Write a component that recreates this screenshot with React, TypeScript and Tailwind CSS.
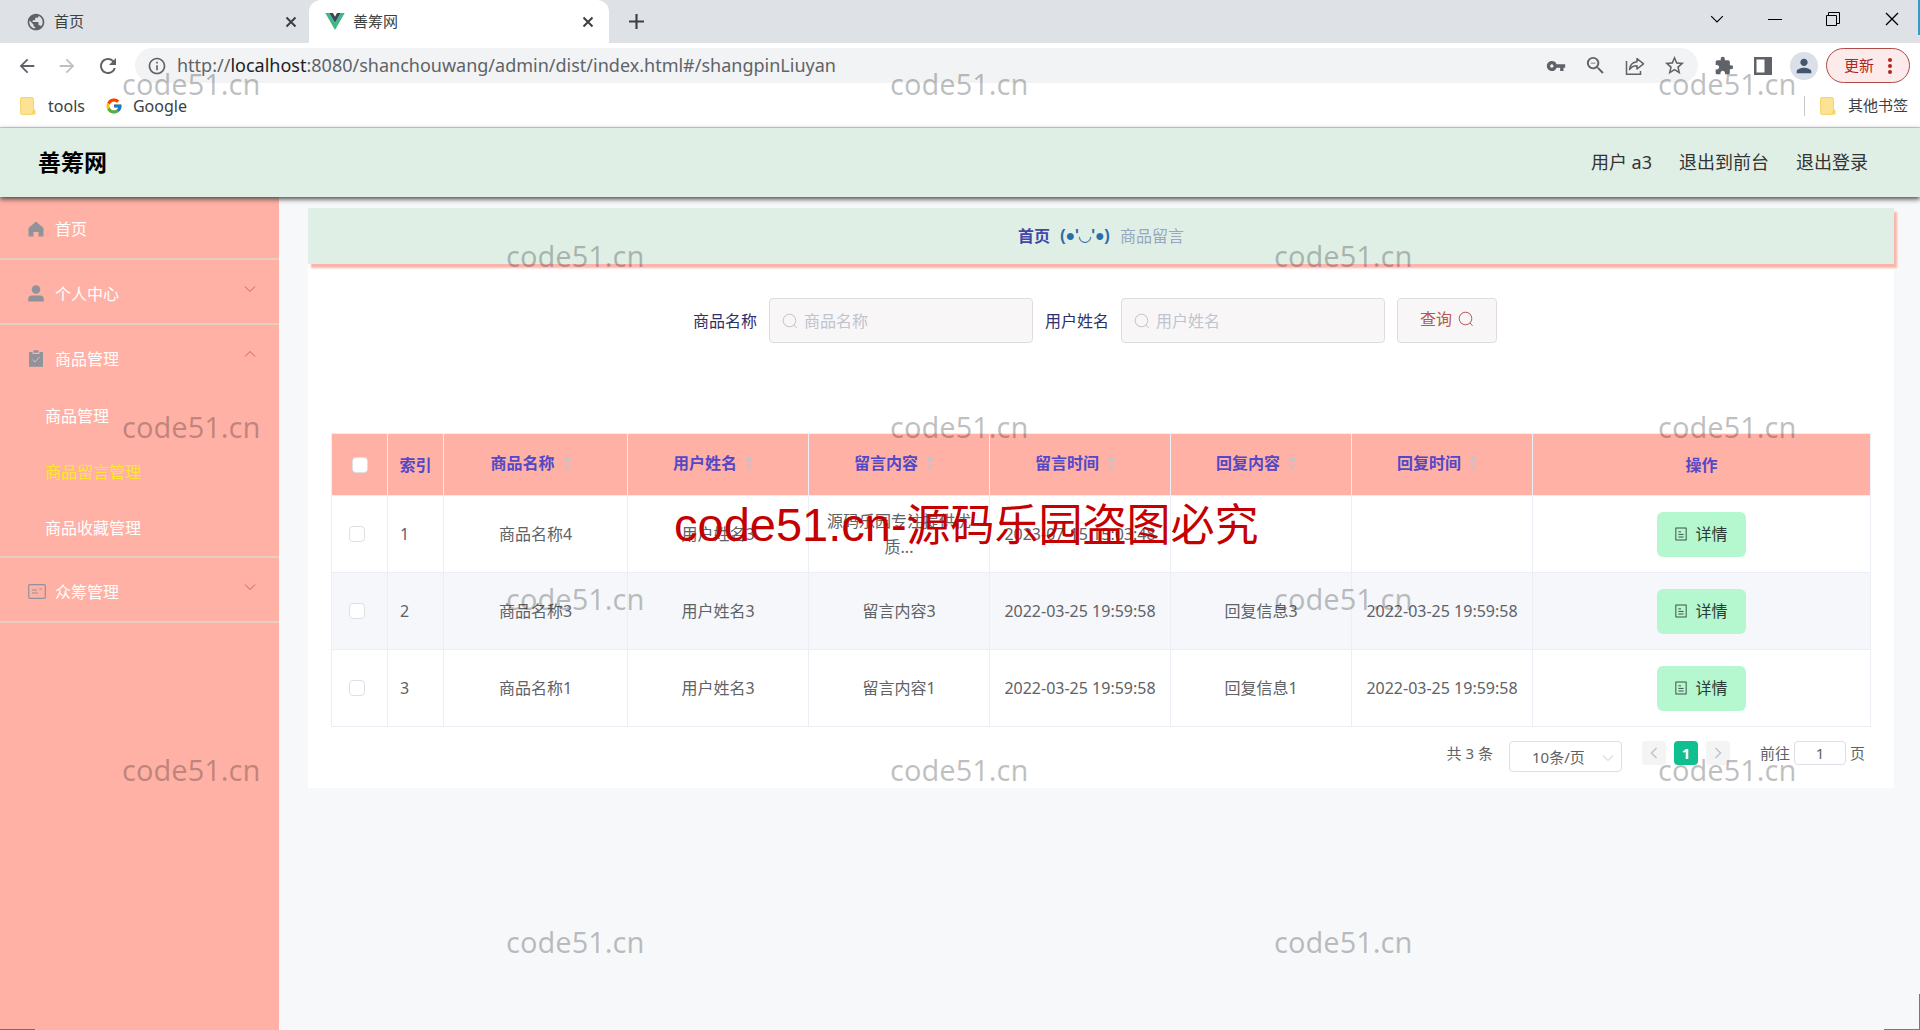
import type { ReactNode } from 'react';
import { FcGoogle } from 'react-icons/fc';
import {
  MdArrowBack,
  MdArrowForward,
  MdExtension,
  MdInfoOutline,
  MdPerson,
  MdPublic,
  MdRefresh,
  MdStarBorder,
  MdVpnKey,
  MdZoomOut,
} from 'react-icons/md';

interface IIconProps {
  className?: string;
}

const CloseIcon = ({ className }: IIconProps) => (
  <svg viewBox="0 0 12 12" className={className} fill="none" stroke="currentColor">
    <path d="M1.5 1.5l9 9M10.5 1.5l-9 9" />
  </svg>
);

const ChevronIcon = ({ className }: IIconProps) => (
  <svg viewBox="0 0 12 12" className={className} fill="none" stroke="currentColor">
    <path d="M1 3.5l5 5 5-5" />
  </svg>
);

const VueIcon = ({ className }: IIconProps) => (
  <svg viewBox="0 0 24 21" className={className}>
    <path d="M0 0h5l7 12 7-12h5L12 21z" fill="#41b883" />
    <path d="M5 0h4.5L12 4.5 14.5 0H19l-7 12z" fill="#34495e" />
  </svg>
);

const FolderIcon = ({ className }: IIconProps) => (
  <svg viewBox="0 0 16 18" className={className}>
    <rect x="0.5" y="0.5" width="13" height="17" rx="1.5" fill="#fde293" stroke="#f2d675" />
    <path d="M13.5 11l2 3v3.5h-4z" fill="#f7d768" />
  </svg>
);

const ShareIcon = ({ className }: IIconProps) => (
  <svg viewBox="0 0 20 20" className={className} fill="none" stroke="currentColor" strokeWidth="1.5">
    <path d="M1.5 5v13.2h14V15" />
    <path d="M12 2.5l6.5 5.3-6.5 5.2v-3.2c-3.500 0-5.800 1.200-7.500 3.700.5-4.500 3-7.300 7.500-7.800z" strokeLinejoin="round" />
  </svg>
);

const SearchIcon = ({ className }: IIconProps) => (
  <svg viewBox="0 0 16 16" className={className} fill="none" stroke="currentColor">
    <circle cx="7.5" cy="7.5" r="6.3" />
    <path d="M12 12l2.5 2.8" />
  </svg>
);

const HomeIcon = ({ className }: IIconProps) => (
  <svg viewBox="0 0 16 16" className={className} fill="currentColor">
    <path d="M8 0.5L0.5 7v8.5h5V11h5v4.5h5V7z" />
  </svg>
);

const UserIcon = ({ className }: IIconProps) => (
  <svg viewBox="0 0 16 17" className={className} fill="currentColor">
    <circle cx="8" cy="4.5" r="4.3" />
    <path d="M0.3 16.5v-2.7c0-2.2 1.3-3.3 3.5-3.3h8.4c2.2 0 3.5 1.1 3.5 3.3v2.7z" />
  </svg>
);

const ClipboardIcon = ({ className }: IIconProps) => (
  <svg viewBox="0 0 16 17" className={className}>
    <path d="M1 2h3.5v2h7V2H15v14.8H1z" fill="currentColor" />
    <rect x="5.5" y="0.3" width="5" height="2.5" rx="0.5" fill="currentColor" />
    <path d="M4.5 9.5l2.5 2.5 4.5-5" fill="none" stroke="#ffb1a5" />
  </svg>
);

const PostcardIcon = ({ className }: IIconProps) => (
  <svg viewBox="0 0 18 15" className={className} fill="none" stroke="currentColor">
    <rect x="0.7" y="0.7" width="16.6" height="13.6" rx="1" strokeWidth="1.2" />
    <path d="M4 6h5M4 9h6M11.5 5h2.5" />
  </svg>
);

const DocumentIcon = ({ className }: IIconProps) => (
  <svg viewBox="0 0 14 16" className={className} fill="none" stroke="currentColor">
    <rect x="1" y="1" width="12" height="14" />
    <path d="M4 5.5h3M4 8.5h6M4 11.5h6" />
  </svg>
);

const SortIcon = () => (
  <svg viewBox="0 0 8 16" className="h-4 w-2" fill="#c0c4cc">
    <path d="M4 1l3.5 5h-7zM4 15l3.5-5h-7z" />
  </svg>
);

const SidePanelIcon = ({ className }: IIconProps) => (
  <svg viewBox="0 0 18 18" className={className}>
    <path d="M0 0h18v18H0zM2.5 2.5v13h8v-13z" fill="currentColor" fillRule="evenodd" />
  </svg>
);

const BrowserTabs = () => (
  <div className="h-[43px] bg-[#dee1e6] flex items-stretch text-[#3c4043]">
    <div className="w-[309px] flex items-center pl-[26px] pr-3 text-[15px]">
      <MdPublic className="h-5 w-5 text-[#5f6368]" />
      <span className="ml-2 flex-1">首页</span>
      <button aria-label="关闭首页">
        <CloseIcon className="h-3 w-3 stroke-2" />
      </button>
    </div>
    <div className="w-[300px] flex items-center pl-4 pr-[15px] text-[15px] bg-white rounded-t-xl">
      <VueIcon className="h-[17px] w-5" />
      <span className="ml-2 flex-1">善筹网</span>
      <button aria-label="关闭善筹网">
        <CloseIcon className="h-3 w-3 stroke-2" />
      </button>
    </div>
    <button aria-label="新标签页" className="ml-5">
      <svg viewBox="0 0 14 14" className="h-[15px] w-[15px]" stroke="currentColor" strokeWidth="2">
        <path d="M7 0v14M0 7h14" />
      </svg>
    </button>
    <div className="ml-auto flex items-center gap-11 pr-5 pb-1.5 text-black">
      <button aria-label="搜索标签页">
        <ChevronIcon className="h-[14px] w-[14px]" />
      </button>
      <button aria-label="最小化">
        <svg viewBox="0 0 14 14" className="h-[14px] w-[14px]" stroke="currentColor">
          <path d="M0 7.5h14" />
        </svg>
      </button>
      <button aria-label="还原">
        <svg viewBox="0 0 14 14" className="h-[14px] w-[14px]" fill="none" stroke="currentColor">
          <path d="M0.5 3.5h10v10h-10zM2.5 3.5v-3h11v11h-3" />
        </svg>
      </button>
      <button aria-label="关闭">
        <CloseIcon className="h-4 w-4" />
      </button>
    </div>
  </div>
);

const AddressBar = () => (
  <div className="h-[45px] pr-[10px] bg-white flex items-center text-[#5f6368]">
    <div className="w-[135px] flex items-center gap-[18px] pl-4">
      <button aria-label="后退">
        <MdArrowBack className="h-[22px] w-[22px]" />
      </button>
      <button aria-label="前进" className="text-[#bdc1c6]">
        <MdArrowForward className="h-[22px] w-[22px]" />
      </button>
      <button aria-label="刷新">
        <MdRefresh className="h-6 w-6" />
      </button>
    </div>
    <div className="h-[35px] flex-1 flex items-center rounded-full bg-[#f1f3f4] pl-3 pr-3">
      <MdInfoOutline className="h-5 w-5" />
      <p className="ml-[10px] flex-1 text-[18px]">
        http://<span className="text-[#202124]">localhost</span>
        :8080/shanchouwang/admin/dist/index.html#/shangpinLiuyan
      </p>
      <div className="flex items-center gap-[18px]">
        <MdVpnKey className="h-5 w-5" />
        <MdZoomOut className="h-[23px] w-[23px]" />
        <ShareIcon className="h-5 w-5" />
        <MdStarBorder className="h-[23px] w-[23px]" />
      </div>
    </div>
    <div className="flex items-center gap-5 ml-4">
      <MdExtension className="h-5 w-5" />
      <SidePanelIcon className="h-[18px] w-[18px]" />
    </div>
    <div className="ml-[18px] h-7 w-7 rounded-full bg-[#dadfe8] flex justify-center items-center">
      <MdPerson className="h-[22px] w-[22px] text-[#44546f]" />
    </div>
    <button className="ml-2 h-[35px] w-[84px] rounded-full border border-[#b04a47] bg-[#fcebea] flex items-center justify-center gap-[14px] text-[15px] text-[#b3261e]">
      更新
      <svg viewBox="0 0 4 16" className="h-4 w-1" fill="currentColor">
        <circle cx="2" cy="2" r="2" />
        <circle cx="2" cy="8" r="2" />
        <circle cx="2" cy="14" r="2" />
      </svg>
    </button>
  </div>
);

const Bookmarks = () => (
  <div className="h-10 bg-white border-b border-[#ccd6d1] flex items-center px-5 pr-3 pb-1 text-[15px] text-[#3c4043]">
    <FolderIcon className="h-[18px] w-4" />
    <a href="#tools" className="ml-3 text-[16px]">tools</a>
    <FcGoogle className="ml-5 h-[18px] w-[18px]" />
    <a href="#google" className="ml-[10px] text-[16px]">Google</a>
    <div className="ml-auto h-5 w-px bg-[#c4c7cc]" />
    <FolderIcon className="ml-[15px] h-[18px] w-4" />
    <a href="#other" className="ml-3">其他书签</a>
  </div>
);

const Header = () => (
  <header className="relative z-10 h-[69px] bg-[#e0efe6] shadow-[0_2px_5px_#444] flex items-center justify-between pl-[38px] pr-[52px]">
    <h1 className="text-[23px] font-bold text-black">善筹网</h1>
    <nav className="flex items-center gap-[27px] text-[18px] text-[#333]">
      <span>用户 a3</span>
      <a href="#front">退出到前台</a>
      <a href="#logout">退出登录</a>
    </nav>
  </header>
);

interface IMenuItemProps {
  icon: ReactNode;
  title: string;
  arrow?: 'up' | 'down';
  children?: ReactNode;
}

const MenuItem = ({ icon, title, arrow, children }: IMenuItemProps) => (
  <li className="border-b-2 border-[#e8cdc0]">
    <button className="h-[63px] w-full flex items-center pt-1 pl-7 pr-[23px] text-left">
      <span className="w-[27px] text-[#909399]">{icon}</span>
      <span className="flex-1">{title}</span>
      {arrow && (
        <ChevronIcon
          className={arrow === 'up' ? 'mb-2.5 h-3 w-3 rotate-180 text-[#d0605c]' : 'mb-2.5 h-3 w-3 text-[#d0605c]'}
        />
      )}
    </button>
    {children}
  </li>
);

const subItems = [
  { title: '商品管理', active: false },
  { title: '商品留言管理', active: true },
  { title: '商品收藏管理', active: false },
];

const Sidebar = () => (
  <aside className="w-[279px] shrink-0 bg-[#ffb1a5] text-[16px] text-white">
    <ul className="-mt-0.5">
      <MenuItem icon={<HomeIcon className="h-4 w-4" />} title="首页" />
      <MenuItem icon={<UserIcon className="h-[17px] w-4" />} title="个人中心" arrow="down" />
      <MenuItem icon={<ClipboardIcon className="h-[17px] w-4" />} title="商品管理" arrow="up">
        <ul>
          {subItems.map((item) => (
            <li key={item.title} className="h-14 flex items-center pl-[45px]">
              <a href="#menu" className={item.active ? 'text-[#ffe62e]' : ''}>
                {item.title}
              </a>
            </li>
          ))}
        </ul>
      </MenuItem>
      <MenuItem icon={<PostcardIcon className="h-[15px] w-[18px]" />} title="众筹管理" arrow="down" />
    </ul>
  </aside>
);

interface ISearchFieldProps {
  id: string;
  label: string;
}

const SearchField = ({ id, label }: ISearchFieldProps) => (
  <div className="flex items-center mr-3">
    <label htmlFor={id} className="mr-3 text-[16px] text-[#2f2f6b]">
      {label}
    </label>
    <div className="h-[45px] w-[264px] flex items-center gap-1.5 px-3 rounded border border-[#dcdcde] bg-[#f8f6f7]">
      <SearchIcon className="h-4 w-4 shrink-0 text-[#c0c4cc]" />
      <input
        id={id}
        placeholder={label}
        className="min-w-0 flex-1 text-[16px] bg-transparent outline-none placeholder:text-[#c0c4cc]"
      />
    </div>
  </div>
);

const columns = ['商品名称', '用户姓名', '留言内容', '留言时间', '回复内容', '回复时间'];

const rows = [
  ['商品名称4', '用户姓名3', '源码乐园专注提供优质...', '2023-07-15 15:03:48', '', ''],
  ['商品名称3', '用户姓名3', '留言内容3', '2022-03-25 19:59:58', '回复信息3', '2022-03-25 19:59:58'],
  ['商品名称1', '用户姓名3', '留言内容1', '2022-03-25 19:59:58', '回复信息1', '2022-03-25 19:59:58'],
];

const MessageTable = () => (
  <table className="w-full table-fixed border-collapse text-[16px] text-[#606266]">
    <colgroup>
      <col className="w-14" />
      <col className="w-14" />
      <col className="w-[184px]" />
      <col className="w-[181px]" />
      <col className="w-[181px]" />
      <col className="w-[181px]" />
      <col className="w-[181px]" />
      <col className="w-[181px]" />
      <col />
    </colgroup>
    <thead className="bg-[#ffb1a5] text-[#5348c8]">
      <tr className="h-[62px]">
        <th className="border border-[#ebeef5]">
          <input
            type="checkbox"
            aria-label="全选"
            className="block mx-auto h-4 w-4 appearance-none rounded-sm border border-[#dcdfe6] bg-white"
          />
        </th>
        <th className="border border-[#ebeef5] font-bold">索引</th>
        {columns.map((title) => (
          <th key={title} className="border border-[#ebeef5] pr-2.5 pb-1 font-bold">
            <span className="flex items-center justify-center gap-2">
              {title}
              <SortIcon />
            </span>
          </th>
        ))}
        <th className="border border-[#ebeef5] font-bold">操作</th>
      </tr>
    </thead>
    <tbody>
      {rows.map((cells, index) => (
        <tr key={cells[0]} className="h-[77px] even:bg-[#f5f7fa]">
          <td className="border border-[#ebeef5]">
            <input
              type="checkbox"
              aria-label={`选择${cells[0]}`}
              className="block ml-[17px] h-4 w-4 appearance-none rounded-sm border border-[#dcdfe6] bg-white"
            />
          </td>
          <td className="border border-[#ebeef5] pl-3">{index + 1}</td>
          {cells.map((text, column) => (
            <td key={column} className="border border-[#ebeef5] px-3 text-center leading-[26px]">
              {text}
            </td>
          ))}
          <td className="border border-[#ebeef5] text-center">
            <button className="h-[45px] w-[89px] inline-flex items-center justify-center gap-2 rounded-md bg-[#b5f7ce] text-[#2b3a33]">
              <DocumentIcon className="h-[14px] w-3" />
              详情
            </button>
          </td>
        </tr>
      ))}
    </tbody>
  </table>
);

const Pagination = () => (
  <div className="mt-[14px] flex items-start justify-end pr-1.5 text-[15px] leading-6 text-[#606266]">
    <span>共 3 条</span>
    <div className="relative ml-4">
      <select
        aria-label="每页条数"
        className="h-[31px] w-[113px] appearance-none rounded-sm border border-[#dcdfe6] bg-white pl-[22px]"
      >
        <option>10条/页</option>
      </select>
      <ChevronIcon className="absolute right-2 top-[11px] h-3 w-3 text-[#c0c4cc]" />
    </div>
    <div className="ml-5 flex gap-2">
      <button aria-label="上一页" className="h-6 w-6 flex items-center justify-center rounded-sm bg-[#f4f4f5] text-[#c0c4cc]">
        <ChevronIcon className="h-3 w-3 rotate-90 stroke-[1.5]" />
      </button>
      <button className="h-6 w-6 rounded-sm bg-[#10bf8f] font-bold text-white">1</button>
      <button aria-label="下一页" className="h-6 w-6 flex items-center justify-center rounded-sm bg-[#f4f4f5] text-[#c0c4cc]">
        <ChevronIcon className="h-3 w-3 -rotate-90 stroke-[1.5]" />
      </button>
    </div>
    <label htmlFor="page" className="ml-[30px]">前往</label>
    <input
      id="page"
      defaultValue="1"
      className="ml-1 mr-1 h-6 w-[52px] rounded border border-[#dcdfe6] text-center"
    />
    <span>页</span>
  </div>
);

const watermarks = [
  'left-[122px] top-[64px]',
  'left-[890px] top-[64px]',
  'left-[1658px] top-[64px]',
  'left-[506px] top-[236px]',
  'left-[1274px] top-[236px]',
  'left-[122px] top-[407px]',
  'left-[890px] top-[407px]',
  'left-[1658px] top-[407px]',
  'left-[506px] top-[579px]',
  'left-[1274px] top-[579px]',
  'left-[122px] top-[750px]',
  'left-[890px] top-[750px]',
  'left-[1658px] top-[750px]',
  'left-[506px] top-[922px]',
  'left-[1274px] top-[922px]',
];

const Watermarks = () => (
  <div className="pointer-events-none absolute inset-0 z-20 overflow-hidden whitespace-nowrap">
    {watermarks.map((place) => (
      <span key={place} className={`absolute text-[29px] leading-10 text-black/25 ${place}`}>
        code51.cn
      </span>
    ))}
    <p className="absolute left-[674px] top-[494px] flex items-baseline text-[#c40000] leading-[60px]">
      <span className="font-['Liberation_Sans'] text-[47px]">code51.cn-</span>
      <span className="text-[44px]">源码乐园盗图必究</span>
    </p>
  </div>
);

// Slivers of the desktop that show at the window corners
const WindowCorners = () => (
  <div className="pointer-events-none absolute inset-0 z-20">
    <div className="absolute right-0 top-0 h-[35px] w-0.5 bg-[#2f9dcb]" />
    <div className="absolute bottom-0 right-0 h-9 w-9 border-b border-r border-[#3d8fa0]" />
    <div className="absolute bottom-0 left-0 h-px w-[35px] bg-[#776a80]" />
  </div>
);

export default function App() {
  return (
    <div className="relative min-h-screen flex flex-col bg-[#f6f8fa] font-['Noto_Sans','Noto_Sans_CJK_SC',sans-serif]">
      <BrowserTabs />
      <AddressBar />
      <Bookmarks />
      <Header />
      <div className="flex flex-1">
        <Sidebar />
        <main className="min-w-0 flex-1 pt-[11px] pl-[29px] pr-[26px]">
          <nav className="relative h-14 flex items-center justify-center gap-[10px] bg-[#e0efe6] shadow-[3px_4px_2px_#fab4aa] text-[16px]">
            <a href="#home" className="font-bold text-[#4246a8]">首页</a>
            <span className="font-['Liberation_Sans','DejaVu_Sans',sans-serif] font-bold text-[#2b6ea6]">(●'◡'●)</span>
            <span className="text-[#97a8be]">商品留言</span>
          </nav>
          <section className="bg-white px-[23px] pt-[34px] pb-4">
            <form className="flex justify-center pr-3">
              <SearchField id="goods" label="商品名称" />
              <SearchField id="user" label="用户姓名" />
              <button
                type="button"
                className="h-[45px] w-[100px] flex items-center justify-center gap-1.5 rounded border border-[#dcdcde] bg-[#f8f6f7] pb-1 text-[16px] text-[#b8584f]"
              >
                查询
                <SearchIcon className="h-4 w-4" />
              </button>
            </form>
            <div className="mt-[90px]">
              <MessageTable />
              <Pagination />
            </div>
          </section>
        </main>
      </div>
      <Watermarks />
      <WindowCorners />
    </div>
  );
}
